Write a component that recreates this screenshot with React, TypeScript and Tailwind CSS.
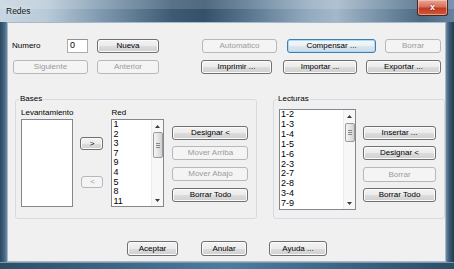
import React from "react";

type BtnProps = {
  cls: string;
  children: React.ReactNode;
  disabled?: boolean;
  focused?: boolean;
};

function Btn({ cls, children, disabled, focused }: BtnProps) {
  const look = disabled
    ? "border-[#b4b8bb] bg-[#f4f4f4] text-[#9b9b9b]"
    : focused
    ? "border-[#3c7fb1] bg-[linear-gradient(to_bottom,#f4f8fa_0%,#eaf1f5_50%,#dbe5ec_51%,#d0dde6_100%)] text-black shadow-[inset_0_0_0_1px_#a9dcf6]"
    : "border-[#707070] bg-[linear-gradient(to_bottom,#f3f3f3_0%,#ebebeb_50%,#dddddd_51%,#cfcfcf_100%)] text-black shadow-[inset_0_0_0_1px_#fbfbfb]";
  return (
    <div
      className={`flex shrink-0 items-center justify-center rounded-[3px] border text-[8px] leading-none ${look} ${cls}`}
    >
      {children}
    </div>
  );
}

function Arrow({ up }: { up?: boolean }) {
  return (
    <svg width="5" height="3" viewBox="0 0 5 3" className="block">
      {up ? (
        <polygon points="0,3 5,3 2.5,0" fill="#3a3a3a" />
      ) : (
        <polygon points="0,0 5,0 2.5,3" fill="#3a3a3a" />
      )}
    </svg>
  );
}

function ScrollBar({ thumbCls }: { thumbCls: string }) {
  return (
    <div className="flex w-[12px] shrink-0 flex-col border-l border-[#ececec] bg-[#f7f7f7]">
      <div className="flex h-[12px] items-center justify-center">
        <Arrow up />
      </div>
      <div className="flex-1">
        <div
          className={`mx-auto flex w-[10px] flex-col items-center justify-center gap-[1px] rounded-[2px] border border-[#9a9a9a] bg-[linear-gradient(to_right,#f6f6f6,#e2e2e2_55%,#cfcfcf)] ${thumbCls}`}
        >
          <div className="h-px w-[4px] bg-[#8a8a8a]" />
          <div className="h-px w-[4px] bg-[#8a8a8a]" />
          <div className="h-px w-[4px] bg-[#8a8a8a]" />
        </div>
      </div>
      <div className="flex h-[12px] items-center justify-center">
        <Arrow />
      </div>
    </div>
  );
}

function ListBox({
  cls,
  items,
  leading,
  thumbCls,
}: {
  cls: string;
  items: string[];
  leading: string;
  thumbCls?: string;
}) {
  return (
    <div className={`flex shrink-0 border border-[#828790] bg-white ${cls}`}>
      <div className={`flex-1 overflow-hidden pl-[1px] text-[9px] text-black ${leading}`}>
        {items.map((it) => (
          <div key={it}>{it}</div>
        ))}
      </div>
      {thumbCls && <ScrollBar thumbCls={thumbCls} />}
    </div>
  );
}

function Group({
  cls,
  title,
  children,
}: {
  cls: string;
  title: string;
  children: React.ReactNode;
}) {
  return (
    <fieldset className={`shrink-0 rounded-[3px] border border-[#d5dbe0] ${cls}`}>
      <legend className="ml-[3px] px-[1px] text-[8px] leading-[10px] text-black">
        {title}
      </legend>
      {children}
    </fieldset>
  );
}

export default function App() {
  return (
    <div className="flex h-[269px] w-[454px] flex-col overflow-hidden bg-[#27475f] font-['Liberation_Sans',Arial,sans-serif]">
      {/* title bar */}
      <div className="relative flex h-[22px] shrink-0 items-center bg-[linear-gradient(to_right,#c6d5e1_0%,#b9cbd9_10%,#7f9ab0_22%,#3d5a74_38%,#34506a_45%,#5a7791_55%,#93abbf_68%,#a3b8c9_74%,#6a869e_86%,#4c6982_93%,#6682a0_100%)]">
        <div className="absolute inset-x-0 top-0 h-[9px] bg-white/15" />
        <span className="relative ml-[6px] mt-[1px] text-[8.5px] text-[#141414] [text-shadow:0_0_4px_rgba(255,255,255,0.9)]">
          Redes
        </span>
        <div className="relative ml-auto mr-[6px] flex h-[16px] w-[31px] items-start justify-center self-start rounded-b-[3px] border border-t-0 border-[#4a2622] bg-[linear-gradient(to_bottom,#e9a695_0%,#d9705c_45%,#c23a22_55%,#cf5a3c_100%)] shadow-[inset_0_0_0_1px_rgba(255,220,210,0.5)]">
          <span className="mt-[1px] text-[9px] font-bold leading-[12px] text-white [text-shadow:0_0_2px_#5a1a10]">
            x
          </span>
        </div>
      </div>

      <div className="flex flex-1">
        <div className="w-[7px] shrink-0 bg-[linear-gradient(to_right,#2a4760,#45657f_60%,#6d8aa2)]" />
        {/* client */}
        <div className="flex flex-1 flex-col border border-[#a9b8c6] bg-[#f0f0f0] text-[8px] text-black">
          {/* row 1 */}
          <div className="mt-[16px] flex h-[14px] items-center">
            <span className="ml-[4px] w-[55px] shrink-0">Numero</span>
            <div className="flex h-[14px] w-[21px] shrink-0 items-center border border-[#abadb3] border-t-[#8e9196] bg-white pl-[2px] text-[9px]">
              0
            </div>
            <Btn cls="ml-[9px] w-[62px] h-[14px]">Nueva</Btn>
            <Btn cls="ml-[43px] w-[75px] h-[14px]" disabled>
              Automatico
            </Btn>
            <Btn cls="ml-[10px] w-[89px] h-[14px]" focused>
              Compensar ...
            </Btn>
            <Btn cls="ml-[9px] w-[56px] h-[14px]" disabled>
              Borrar
            </Btn>
          </div>
          {/* row 2 */}
          <div className="mt-[7px] flex h-[14px] items-center">
            <Btn cls="ml-[5px] w-[75px] h-[14px]" disabled>
              Siguiente
            </Btn>
            <Btn cls="ml-[9px] w-[62px] h-[14px]" disabled>
              Anterior
            </Btn>
            <Btn cls="ml-[42px] w-[71px] h-[14px]">Imprimir ...</Btn>
            <Btn cls="ml-[11px] w-[74px] h-[14px]">Importar ...</Btn>
            <Btn cls="ml-[9px] w-[75px] h-[14px]">Exportar ...</Btn>
          </div>

          {/* groups */}
          <div className="mt-[20px] flex items-start">
            <Group cls="ml-[7px] w-[242px] h-[125px]" title="Bases">
              <div className="ml-[5px] mt-[4px] flex items-start">
                <div className="flex flex-col">
                  <span className="h-[11px] leading-[10px]">Levantamiento</span>
                  <ListBox cls="w-[52px] h-[88px]" items={[]} leading="leading-[9.6px]" />
                </div>
                <div className="ml-[7px] mt-[29px] flex flex-col">
                  <Btn cls="w-[23px] h-[13px] ml-0">&gt;</Btn>
                  <Btn cls="mt-[26px] ml-[1px] w-[22px] h-[12px]" disabled>
                    &lt;
                  </Btn>
                </div>
                <div className="ml-[8px] flex flex-col">
                  <span className="h-[11px] leading-[10px]">Red</span>
                  <ListBox
                    cls="w-[53px] h-[88px]"
                    items={["1", "2", "3", "7", "9", "4", "5", "8", "11"]}
                    leading="leading-[9.6px]"
                    thumbCls="h-[26px]"
                  />
                </div>
                <div className="ml-[8px] mt-[18px] flex flex-col">
                  <Btn cls="w-[76px] h-[14px]">Designar &lt;</Btn>
                  <Btn cls="mt-[6px] w-[76px] h-[14px]" disabled>
                    Mover Arriba
                  </Btn>
                  <Btn cls="mt-[7px] w-[76px] h-[14px]" disabled>
                    Mover Abajo
                  </Btn>
                  <Btn cls="mt-[7px] w-[76px] h-[14px]">Borrar Todo</Btn>
                </div>
              </div>
            </Group>

            <Group cls="ml-[16px] w-[172px] h-[125px]" title="Lecturas">
              <div className="ml-[5px] mt-[5px] flex items-start">
                <ListBox
                  cls="w-[77px] h-[101px]"
                  items={["1-2", "1-3", "1-4", "1-5", "1-6", "2-3", "2-7", "2-8", "3-4", "7-9"]}
                  leading="leading-[9.9px]"
                  thumbCls="mt-[1px] h-[19px]"
                />
                <div className="ml-[7px] mt-[17px] flex flex-col">
                  <Btn cls="w-[73px] h-[14px]">Insertar ...</Btn>
                  <Btn cls="mt-[6px] w-[73px] h-[14px]">Designar &lt;</Btn>
                  <Btn cls="mt-[7px] w-[73px] h-[15px]" disabled>
                    Borrar
                  </Btn>
                  <Btn cls="mt-[6px] w-[73px] h-[14px]">Borrar Todo</Btn>
                </div>
              </div>
            </Group>
          </div>

          {/* bottom buttons */}
          <div className="mt-auto mb-[5px] flex">
            <Btn cls="ml-[119px] w-[51px] h-[15px]">Aceptar</Btn>
            <Btn cls="ml-[23px] w-[46px] h-[15px]">Anular</Btn>
            <Btn cls="ml-[22px] w-[58px] h-[15px]">Ayuda ...</Btn>
          </div>
        </div>
        <div className="w-[8px] shrink-0 bg-[linear-gradient(to_left,#1f3a50,#3c5c76_60%,#6d8aa2)]" />
      </div>
      <div className="h-[7px] shrink-0 bg-[linear-gradient(to_right,#2d4d66,#3f6a8a_30%,#4c7ca0_50%,#3f6a8a_70%,#2d4d66)] shadow-[inset_0_1px_0_#7d9ab1]" />
    </div>
  );
}
